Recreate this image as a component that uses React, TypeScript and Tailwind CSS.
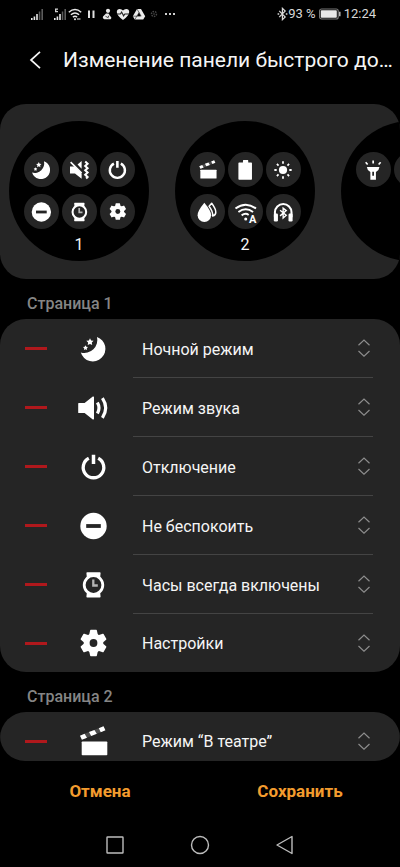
import React from "react";

interface IconProps {
  className?: string;
}

const Svg = ({ className = "", children }: IconProps & { children: React.ReactNode }) => (
  <svg viewBox="0 0 30 30" fill="none" aria-hidden="true" className={`overflow-visible text-white ${className}`}>
    {children}
  </svg>
);

const MoonIcon = ({ className }: IconProps) => (
  <Svg className={className}>
    <path d="M19 2.9A12.6 12.6 0 1 1 2.8 18.5A13 13 0 0 0 19 2.9Z" fill="currentColor" />
    <path d="M12 4.200l1.100 2.300 2.500.3-1.800 1.800.4 2.500-2.200-1.200-2.300 1.200.4-2.500-1.800-1.800 2.600-.3zM7.500 11.200l.8 1.500 1.700.3-1.200 1.200.2 1.700-1.500-.7-1.500.7.2-1.700-1.200-1.200 1.700-.3z" fill="currentColor" />
  </Svg>
);

const SoundIcon = ({ className }: IconProps) => (
  <Svg className={className}>
    <path d="M.8 10h5.8l8.2-6.400q1.200-.6 1.200.6v21.600q0 1.200-1.200.6L6.600 20H.8q-.6 0-.6-.6v-8.800q0-.6.6-.6Z" fill="currentColor" />
    <path d="M19.400 9.500q3.200 5.500 0 11M24.400 5.200q6.600 9.800 0 19.600" stroke="currentColor" strokeWidth="3.200" />
  </Svg>
);

const VibrateIcon = ({ className }: IconProps) => (
  <Svg className={className}>
    <path d="M2.700 10.200h6l9.900 9.900V27L9.500 19.800H2.700ZM18.600 2.800v10.400L13 7.600z" fill="currentColor" />
    <path d="M3.600 4.200l15 15" stroke="currentColor" strokeWidth="2.200" />
    <path d="M23.500 3.500l3.200 3-3.200 3 3.200 3-3.200 3 3.200 3-3.200 3 3.200 3-2 2" stroke="currentColor" strokeWidth="2.800" />
  </Svg>
);

const PowerIcon = ({ className }: IconProps) => (
  <Svg className={className}>
    <path d="M10.800 6.300A10.300 10.300 0 1 0 20.200 6.300" stroke="currentColor" strokeWidth="3.300" />
    <path d="M15.500 2.800V12" stroke="currentColor" strokeWidth="3.500" />
  </Svg>
);

const DoNotDisturbIcon = ({ className }: IconProps) => (
  <Svg className={className}>
    <circle cx="15.500" cy="15" r="13.200" fill="currentColor" />
    <rect x="8.200" y="13.100" width="14.600" height="3.800" fill="#252525" />
  </Svg>
);

const WatchIcon = ({ className }: IconProps) => (
  <Svg className={className}>
    <path d="M9.200 2.300q-.8 0-.8.8L9 9h13l.6-5.900q0-.8-.8-.8zM9 21l-.6 5.700q0 .8.8.8h12.600q.8 0 .8-.8L22 21z" fill="currentColor" />
    <circle cx="15.500" cy="15" r="9.300" fill="#252525" stroke="currentColor" strokeWidth="2.800" />
    <path d="M15.300 9.500v6h4.500" stroke="#b4b4b4" strokeWidth="2.300" />
  </Svg>
);

const GearIcon = ({ className }: IconProps) => (
  <Svg className={className}>
    <g fill="currentColor">
      <circle cx="15.500" cy="15" r="9.800" />
      {[0, 60, 120].map((angle) => (
        <path
          key={angle}
          d="M12.800 1.800h5.400q.6 0 .7.600l1 4.600v16l-1 4.600q-.1.600-.7.600h-5.400q-.6 0-.7-.6l-1-4.600V7l1-4.600q.1-.6.700-.6z"
          transform={`rotate(${angle} 15.500 15)`}
        />
      ))}
    </g>
    <circle cx="15.500" cy="15" r="3.900" fill="#252525" />
  </Svg>
);

const ClapperIcon = ({ className }: IconProps) => (
  <Svg className={className}>
    <path d="M2.200 9.500L25.500.2l2 4L4 13.800z" fill="#4c4c4c" />
    <path d="M2 9.700l4.600-1.900 2.400 3.900L3.900 13.800zM11 6.100l5.400-2.200 2.400 3.900-5.600 2.200zM20.800 2.200L25.500.3l1.900 4-4.600 1.900z" fill="currentColor" />
    <rect x="3.700" y="15.400" width="25.600" height="13.800" rx=".8" fill="currentColor" />
  </Svg>
);

const BatteryIcon = ({ className }: IconProps) => (
  <Svg className={className}>
    <path d="M7 4.800h5.200V2q0-.6.600-.6h6q.6 0 .6.600v2.800H23.500q1 0 1 1v21.400q0 1-1 1H7q-1 0-1-1V5.800q0-1 1-1z" fill="currentColor" />
  </Svg>
);

const SunIcon = ({ className }: IconProps) => (
  <Svg className={className}>
    <circle cx="15" cy="15" r="5.600" fill="currentColor" />
    <g stroke="currentColor" strokeWidth="2.400">
      <path d="M15 3.200v3.200M15 23.600v3.200M3.200 15h3.200M23.600 15h3.200M6.700 6.700l2.200 2.200M21.100 21.100l2.200 2.200M6.700 23.300l2.200-2.200M21.100 8.900l2.200-2.200" />
    </g>
  </Svg>
);

const DropsIcon = ({ className }: IconProps) => (
  <Svg className={className}>
    <path d="M11.400 2.500Q20.600 13.500 20.600 19.300A9.200 9.200 0 0 1 2.200 19.300Q2.200 13.500 11.400 2.500Z" fill="currentColor" />
    <path d="M17.800 7.200L21.400 3Q27 10.500 27 15.200q0 4.200-4.400 5.200Q23.400 14.500 17.800 7.200Z" stroke="currentColor" strokeWidth="2" strokeLinejoin="round" />
  </Svg>
);

const WifiAutoIcon = ({ className }: IconProps) => (
  <Svg className={className}>
    <g stroke="currentColor" strokeWidth="2.700">
      <path d="M2 10.200q14-10.400 28 0M6 15q10-7.400 20 0M10.400 19.600q5.400-3.800 9.600-.6" />
    </g>
    <circle cx="16" cy="24.500" r="2.100" fill="currentColor" />
    <text x="20.500" y="30" fontSize="15" fontWeight="700" fill="currentColor">
      A
    </text>
  </Svg>
);

const HeadsetIcon = ({ className }: IconProps) => (
  <Svg className={className}>
    <path d="M4 22v-6.500a11.300 11.300 0 0 1 22.600 0V22" stroke="currentColor" strokeWidth="2.800" />
    <rect x="2.500" y="17" width="5.600" height="11" rx="1.600" fill="currentColor" />
    <rect x="22.500" y="17" width="5.600" height="11" rx="1.600" fill="currentColor" />
    <path d="M11 12.500l8.400 7-4.200 3.700V9.800l4.200 3.300-8.400 7.200" stroke="currentColor" strokeWidth="1.900" />
  </Svg>
);

const FlashlightIcon = ({ className }: IconProps) => (
  <Svg className={className}>
    <path fillRule="evenodd" d="M6.600 10.800h17.200q0 3.600-4.800 7V28.200h-7.600V17.800q-4.800-3.400-4.800-7zM14 17.500v5.200h2.400v-5.200z" fill="currentColor" />
    <path d="M15.200 2v4.300M5 4.500l2.700 3M25.400 4.500l-2.700 3" stroke="currentColor" strokeWidth="2.300" />
  </Svg>
);

const SignalIcon = ({ roaming = false }: { roaming?: boolean }) => (
  <svg viewBox="0 0 12 14" aria-hidden="true" className="w-3 h-3.5">
    <path d="M0 11h1.600v2H0zM2.600 9.500h1.600V13H2.600zM5.200 7h1.600v6H5.200z" fill="#e8e8e8" />
    <path d="M7.800 4.500h1.500V13H7.800zM10.400 2H12v11h-1.600z" fill="#5c5c5c" />
    {roaming && <path d="M1 1.500h3v1.200H2.300V4H4v1.200H1z" fill="#d0d0d0" />}
  </svg>
);

const StatusBar = () => (
  <div className="flex items-center justify-between h-7 pl-[31px] pr-6 text-[#d8d8d8]">
    <div className="flex items-center">
      <SignalIcon />
      <span className="w-[11px]" />
      <SignalIcon roaming />
      <div className="flex items-center gap-0.5 ml-0.5">
        <svg viewBox="0 0 14 14" fill="none" className="w-3.5 h-3.5">
          <path d="M.8 5.200q6.200-5.400 12.400 0M2.900 7.700q4.100-3.500 8.200 0M4.900 10.200q2.100-1.700 4.200 0" stroke="#e8e8e8" strokeWidth="1.500" />
          <circle cx="7" cy="12.200" r="1" fill="#e8e8e8" />
          <path d="M9 12h3.500" stroke="#999" strokeWidth="1.600" />
        </svg>
        <svg viewBox="0 0 14 14" className="w-3.5 h-3.5">
          <path d="M4 3.500h2V11H4zM8.500 3.500h2V11h-2z" fill="#e0e0e0" />
        </svg>
        <svg viewBox="0 0 14 14" fill="none" className="w-3.5 h-3.5">
          <circle cx="8" cy="3.800" r="2.100" fill="#e8e8e8" />
          <path d="M6 6.500L3 9.500q-1 3 3.500 2.800h4q1.800-1.600-.2-3L8.500 6.400z" fill="#e8e8e8" />
          <path d="M5.500 9.300l3 1.500M9 8.500l-1 2" stroke="#222" strokeWidth=".8" />
        </svg>
        <svg viewBox="0 0 14 14" fill="none" className="w-3.5 h-3.5">
          <path d="M7 13Q.8 8.300.8 4.900.8 1.900 3.800 1.900q2 0 3.200 1.700 1.200-1.700 3.200-1.700 3 0 3 3Q13.200 8.300 7 13z" fill="#ececec" />
          <path d="M.8 7h3.600l1.200-2 2 3.800L8.800 7h4.400" stroke="#222" strokeWidth="1.100" />
        </svg>
        <svg viewBox="0 0 14 14" className="w-3.5 h-3.5">
          <path fillRule="evenodd" d="M5 2h4l4.200 7.200-2 3.400H2.800l-2-3.400zM7 5.600L5.200 9h3.600z" fill="#ececec" />
          <path d="M5 2l4.200 7.200M.8 9.200h8M2.800 12.600L7 5.600" stroke="#222" strokeWidth=".6" fill="none" />
        </svg>
        <svg viewBox="0 0 14 14" fill="none" className="w-3.5 h-3.5">
          <circle cx="6" cy="7" r="2.500" stroke="#484848" strokeWidth="1.400" strokeDasharray="1.500 1" />
          <circle cx="6" cy="7" r=".8" fill="#555" />
        </svg>
        <svg viewBox="0 0 14 14" className="w-3.5 h-3.5">
          <path d="M1 6h2v2H1zM5 6h2v2H5zM9 6h2v2H9z" fill="#d0d0d0" />
        </svg>
      </div>
    </div>

    <div className="flex items-center text-[13px]">
      <svg viewBox="0 0 11 14" fill="none" className="w-[11px] h-3.5">
        <path d="M2.200 3.800l6 6.200-2.800 2.700V1.300L8.200 4l-6 6.200" stroke="currentColor" strokeWidth="1.200" />
        <path d="M.6 6.300h1.600v1.400H.6zM8.800 6.300h1.600v1.400H8.800z" fill="currentColor" />
      </svg>
      <span>93 %</span>
      <svg viewBox="0 0 22 12" fill="none" className="w-[22px] h-3 ml-[3px] mr-[3px]">
        <rect x=".6" y="1" width="18.600" height="10" rx="2" stroke="#777" strokeWidth="1.200" />
        <rect x="1.800" y="2.200" width="16" height="7.600" rx=".8" fill="#e8e8e8" />
        <path d="M20.800 3.800v4.400" stroke="#c8c8c8" strokeWidth="1.400" />
      </svg>
      <span>12:24</span>
    </div>
  </div>
);

type Icon = React.ComponentType<IconProps>;

interface WatchPage {
  id: number;
  icons: (Icon | null)[];
}

const pages: WatchPage[] = [
  { id: 1, icons: [MoonIcon, VibrateIcon, PowerIcon, DoNotDisturbIcon, WatchIcon, GearIcon] },
  { id: 2, icons: [ClapperIcon, BatteryIcon, SunIcon, DropsIcon, WifiAutoIcon, HeadsetIcon] },
  { id: 3, icons: [FlashlightIcon, null] },
];

const firstPageItems: { label: string; icon: Icon }[] = [
  { label: "Ночной режим", icon: MoonIcon },
  { label: "Режим звука", icon: SoundIcon },
  { label: "Отключение", icon: PowerIcon },
  { label: "Не беспокоить", icon: DoNotDisturbIcon },
  { label: "Часы всегда включены", icon: WatchIcon },
  { label: "Настройки", icon: GearIcon },
];

const secondPageItems: { label: string; icon: Icon }[] = [
  { label: "Режим “В театре”", icon: ClapperIcon },
];

const WatchPreview = ({ page }: { page: WatchPage }) => (
  <div className="shrink-0 w-[140px] h-[140px] rounded-full bg-black pt-[31px] flex flex-col items-center">
    <div className="grid grid-cols-3 grid-rows-2 gap-x-[3px] gap-y-[7px]">
      {page.icons.map((ItemIcon, i) => (
        <div key={i} className="w-[35px] h-[35px] rounded-full bg-[#252525] flex items-center justify-center">
          {ItemIcon && <ItemIcon className={ItemIcon === ClapperIcon || ItemIcon === GearIcon ? "w-[19px] h-[19px]" : "w-[22px] h-[22px]"} />}
        </div>
      ))}
    </div>
    {page.id < 3 && <span className="text-base leading-8">{page.id}</span>}
  </div>
);

const ItemRow = ({ label, icon: ItemIcon }: { label: string; icon: Icon }) => (
  <li className="group flex items-center h-[59px] last:h-[58px] pl-[25px] pr-[27px]">
    <button type="button" aria-label={`Удалить: ${label}`} className="w-[22px] py-3 cursor-pointer">
      <span className="block h-[3px] bg-[#b0181c]" />
    </button>
    <ItemIcon className="shrink-0 w-[30px] h-[30px] ml-[31px] mr-[25px]" />
    <div className="flex-1 h-full flex items-center justify-between pl-[9px] pr-[3px] border-b border-[#444] group-last:border-transparent">
      <span className="text-base pt-[3px]">{label}</span>
      <button type="button" aria-label={`Переместить: ${label}`} className="cursor-grab">
        <svg viewBox="0 0 12 18" fill="none" className="w-3 h-[18px]">
          <path d="M.5 6.200L6 1l5.500 5.200M.5 12L6 17.200l5.500-5.200" stroke="#8c8c8c" strokeWidth="1.200" />
        </svg>
      </button>
    </div>
  </li>
);

const ItemSection = ({ title, items }: { title: string; items: { label: string; icon: Icon }[] }) => (
  <section>
    <h2 className="h-10 pt-[5px] pl-[27px] text-base leading-10 font-medium text-[#858585]">
      {title}
    </h2>
    <ul className="bg-[#252525] rounded-[26px]">
      {items.map((item) => (
        <ItemRow key={item.label} {...item} />
      ))}
    </ul>
  </section>
);

const App = () => {
  return (
    <div className="h-screen flex flex-col overflow-hidden bg-black text-[#f5f5f5] font-[Roboto,sans-serif]">
      <StatusBar />

      {/* Header */}
      <header className="flex items-center h-16 pl-[29px] mb-3">
        <button type="button" aria-label="Назад" className="shrink-0 mr-[22px] cursor-pointer">
          <svg viewBox="0 0 12 18" fill="none" className="w-3 h-[18px]">
            <path d="M11 .8L2 9l9 8.200" stroke="currentColor" strokeWidth="1.700" />
          </svg>
        </button>
        <h1 className="text-[21px] pt-0.5 whitespace-nowrap">Изменение панели быстрого до…</h1>
      </header>

      {/* Watch page previews */}
      <div className="shrink-0 flex gap-[26px] pt-[17px] pl-[9px] pb-[18px] bg-[#252525] rounded-[26px] overflow-hidden">
        {pages.map((page) => (
          <WatchPreview key={page.id} page={page} />
        ))}
      </div>

      {/* Page lists */}
      <main className="flex-1 min-h-0 overflow-y-auto [scrollbar-width:none] rounded-b-[25px]">
        <ItemSection title="Страница 1" items={firstPageItems} />
        <ItemSection title="Страница 2" items={secondPageItems} />
      </main>

      {/* Actions */}
      <div className="grid grid-cols-2 h-[62px] text-[17px] font-bold text-[#f39c2e]">
        <button type="button" className="cursor-pointer">Отмена</button>
        <button type="button" className="cursor-pointer">Сохранить</button>
      </div>

      {/* System navigation */}
      <nav className="flex items-center justify-center gap-[65px] h-11 text-[#bdbdbd]">
        <button type="button" aria-label="Последние приложения">
          <svg viewBox="0 0 20 20" fill="none" className="w-5 h-5">
            <rect x="2" y="2" width="16" height="16" rx=".5" stroke="currentColor" strokeWidth="1.400" />
          </svg>
        </button>
        <button type="button" aria-label="Домой">
          <svg viewBox="0 0 20 20" fill="none" className="w-5 h-5">
            <circle cx="10" cy="10" r="8.500" stroke="currentColor" strokeWidth="1.400" />
          </svg>
        </button>
        <button type="button" aria-label="Назад">
          <svg viewBox="0 0 20 20" fill="none" className="w-5 h-5">
            <path d="M17 1.500v17L2 10z" stroke="currentColor" strokeWidth="1.400" strokeLinejoin="round" />
          </svg>
        </button>
      </nav>
    </div>
  );
};

export default App;
